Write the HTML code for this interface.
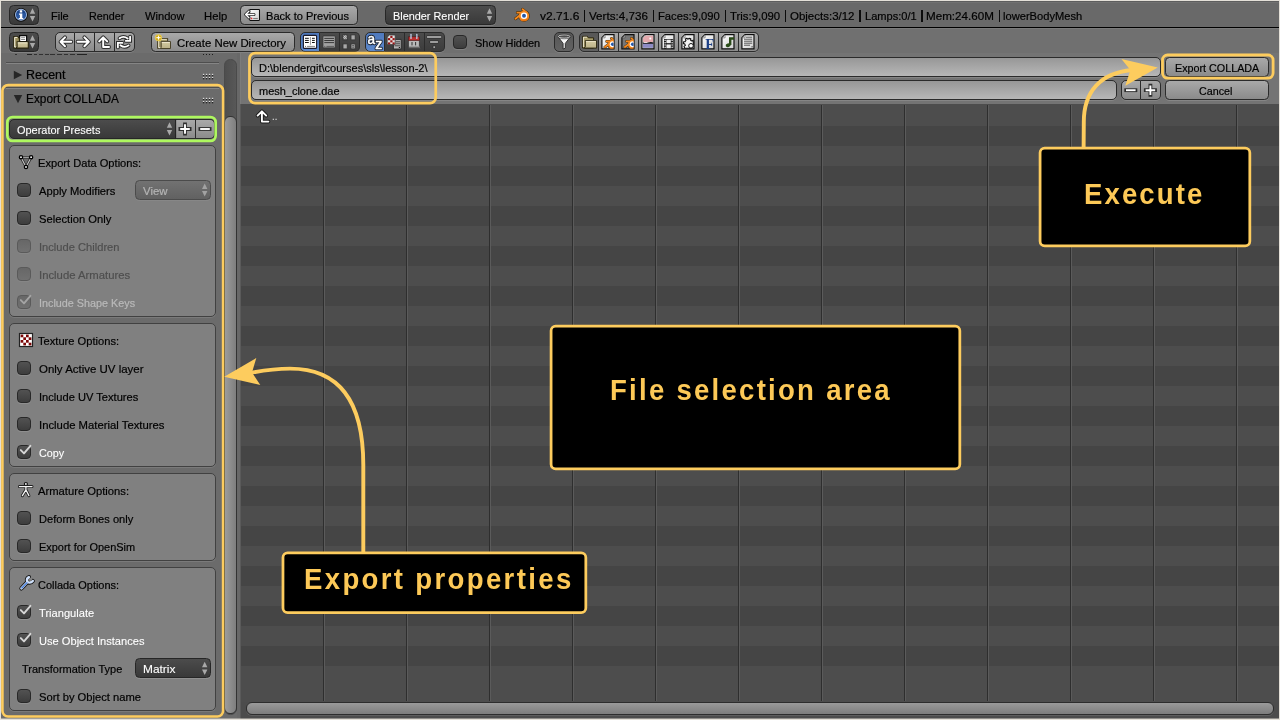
<!DOCTYPE html>
<html><head><meta charset="utf-8">
<style>
*{box-sizing:border-box;margin:0;padding:0}
html,body{width:1280px;height:720px;overflow:hidden;background:#727272;font-family:"Liberation Sans",sans-serif}
#root{position:absolute;left:0;top:0;width:1280px;height:720px;overflow:hidden;background:#727272}
#root div,#root span,#root svg{position:absolute}
.tx{white-space:pre;transform-origin:0 0;font-family:"Liberation Sans",sans-serif}
.btn{border:1px solid #2b2b2b;border-radius:4.5px;background:linear-gradient(#a9a9a9,#8b8b8b);box-shadow:0 1px 0 rgba(255,255,255,.13)}
.seg{border:1px solid #2b2b2b;background:linear-gradient(#a9a9a9,#8b8b8b);box-shadow:0 1px 0 rgba(255,255,255,.13)}
.segd{border:1px solid #2b2b2b;background:linear-gradient(#4b4b4b,#3c3c3c);box-shadow:0 1px 0 rgba(255,255,255,.13)}
.segb{border:1px solid #2b2b2b;background:linear-gradient(#4f79bd,#5c88cb);box-shadow:0 1px 0 rgba(255,255,255,.13)}
.segs{border:1px solid #2b2b2b;background:linear-gradient(#575757,#626262);box-shadow:0 1px 0 rgba(255,255,255,.13)}
.rl{border-radius:5px 0 0 5px}.rr{border-radius:0 5px 5px 0}.nl{border-left:none}
.menu{border:1px solid #262626;border-radius:4.5px;background:linear-gradient(#4c4c4c,#393939);box-shadow:0 1px 0 rgba(255,255,255,.13)}
.menul{border:1px solid #4b4b4b;border-radius:4.5px;background:linear-gradient(#727272,#616161);box-shadow:0 1px 0 rgba(255,255,255,.06)}
.field{border:1px solid #2b2b2b;border-radius:5px;background:linear-gradient(#979797,#b7b7b7);box-shadow:0 1px 0 rgba(255,255,255,.13)}
.chk{width:14px;height:14px;border:1px solid #282828;border-radius:4px;background:linear-gradient(#525252,#3d3d3d);box-shadow:0 1px 0 rgba(255,255,255,.12)}
.chkd{width:14px;height:14px;border:1px solid #5a5a5a;border-radius:4px;background:linear-gradient(#676767,#717171);box-shadow:0 1px 0 rgba(255,255,255,.05)}
.box{border:1px solid #414141;border-radius:5px;background:#808080;box-shadow:0 1px 0 rgba(255,255,255,.10)}
.ann{border:2.8px solid #fdcc5e;border-radius:7px;background:#000}
.yl{border:2.7px solid #fdcc5e;border-radius:7px}
</style></head><body>
<div id="root">

<!-- ===== file list area ===== -->
<div style="left:241px;top:104px;width:1038px;height:615px;background:#4c4c4c"></div>
<div style="left:241px;top:104px;width:1038px;height:598px;background:#4d4d4d"></div>
<div style="left:241px;top:106px;width:1038px;height:580px;background:repeating-linear-gradient(#4d4d4d 0,#4d4d4d 20px,#454545 20px,#454545 40px)"></div>
<div id="cols" style="left:241px;top:105px;width:1038px;height:596px;background:repeating-linear-gradient(90deg,transparent 0,transparent 82px,#2e2e2e 82px,#2e2e2e 83px,transparent 83px);"></div>
<div style="left:242px;top:105px;width:1038px;height:596px;background:repeating-linear-gradient(90deg,transparent 0,transparent 82px,#5b5b5b 82px,#5b5b5b 83px,transparent 83px);"></div>
<!-- h scrollbar -->
<div style="left:245.8px;top:702.4px;width:1028px;height:12.2px;border:1px solid #2d2d2d;border-radius:6px;background:linear-gradient(#9a9a9a,#7d7d7d);box-shadow:0 1px 0 rgba(255,255,255,.1)"></div>

<!-- ===== file bar (path / filename) ===== -->
<div style="left:241px;top:53px;width:1038px;height:51px;background:#747474"></div>
<div class="field" style="left:251px;top:57.3px;width:910px;height:19.3px"></div>
<div class="field" style="left:251px;top:80.3px;width:866px;height:19.3px"></div>
<div class="seg rl" style="left:1121px;top:80.3px;width:20px;height:19.3px"></div>
<div class="seg rr nl" style="left:1141px;top:80.3px;width:20px;height:19.3px"></div>
<div class="btn" style="left:1165px;top:57.3px;width:104px;height:19.3px"></div>
<div class="btn" style="left:1165px;top:80.3px;width:104px;height:19.3px"></div>

<!-- ===== left panel ===== -->
<div id="lp" style="left:0;top:53px;width:239px;height:667px;background:#6b6b6b"></div>
<div style="left:237px;top:53px;width:2.5px;height:667px;background:#686868"></div><div style="left:239.5px;top:53px;width:1.5px;height:51px;background:#7c7c7c"></div><div style="left:239.5px;top:104px;width:1.5px;height:616px;background:#5a5a5a"></div>
<!-- v scrollbar -->
<div style="left:224.4px;top:59px;width:12.4px;height:656px;border-radius:6.2px;background:linear-gradient(90deg,#4e4e4e,#585858);border:1px solid #4a4a4a"></div>
<div style="left:224.4px;top:116.4px;width:12.4px;height:598px;border-radius:6px;background:linear-gradient(90deg,#9c9c9c,#7e7e7e);border:1px solid #333"></div>
<!-- cut-off previous panel header -->
<div style="left:27px;top:54px;width:60px;height:1.4px;opacity:.8;background:linear-gradient(90deg,#111 0,#111 9%,transparent 9%,transparent 12%,#222 12%,#222 17%,transparent 17%,transparent 20%,#222 20%,#222 27%,transparent 27%,transparent 30%,#222 30%,#222 36%,transparent 36%,transparent 38%,#222 38%,#222 47%,transparent 47%,transparent 50%,#222 50%,#222 58%,transparent 58%,transparent 61%,#222 61%,#222 68%,transparent 68%,transparent 71%,#222 71%,#222 80%,transparent 80%,transparent 84%,#111 84%,#111 100%)"></div>
<div style="left:15px;top:54px;width:1.5px;height:1.2px;background:#333"></div>
<div style="left:203px;top:54.2px;width:10.4px;height:1.2px;background:repeating-linear-gradient(90deg,#1c1c1c 0,#1c1c1c 1.3px,transparent 1.3px,transparent 3px)"></div>
<!-- panel header lines -->
<div style="left:6px;top:62px;width:213px;height:1px;background:#4e4e4e"></div>
<div style="left:6px;top:63px;width:213px;height:1px;background:#858585"></div>
<div style="left:6px;top:87px;width:213px;height:1px;background:#4e4e4e"></div>
<div style="left:6px;top:88px;width:213px;height:1px;background:#858585"></div>
<!-- boxes -->
<div class="box" style="left:9px;top:145px;width:207px;height:172px"></div>
<div class="box" style="left:9px;top:323px;width:207px;height:144px"></div>
<div class="box" style="left:9px;top:473px;width:207px;height:88px"></div>
<div class="box" style="left:9px;top:567px;width:207px;height:144px"></div>
<!-- operator presets -->
<div class="menu" style="left:9px;top:119.3px;width:168px;height:19.3px;border-radius:5px 0 0 5px"></div>
<div class="seg nl" style="left:176px;top:119.3px;width:20px;height:19.3px"></div>
<div class="seg rr nl" style="left:196px;top:119.3px;width:19px;height:19.3px"></div>
<!-- dropdowns -->
<div class="menul" style="left:135px;top:180.3px;width:76px;height:19.3px"></div>
<div class="menu" style="left:135px;top:658.3px;width:76px;height:19.3px"></div>
<!-- checkboxes -->
<div class="chk" style="left:17px;top:183px"></div>
<div class="chk" style="left:17px;top:211px"></div>
<div class="chkd" style="left:17px;top:239px"></div>
<div class="chkd" style="left:17px;top:267px"></div>
<div class="chkd" style="left:17px;top:295px"></div>
<div class="chk" style="left:17px;top:361px"></div>
<div class="chk" style="left:17px;top:389px"></div>
<div class="chk" style="left:17px;top:417px"></div>
<div class="chk" style="left:17px;top:445px"></div>
<div class="chk" style="left:17px;top:511px"></div>
<div class="chk" style="left:17px;top:539px"></div>
<div class="chk" style="left:17px;top:605px"></div>
<div class="chk" style="left:17px;top:633px"></div>
<div class="chk" style="left:17px;top:689px"></div>

<!-- ===== headers ===== -->
<div id="hdr1" style="left:0;top:0;width:1280px;height:27px;background:linear-gradient(#5e5e5e 0,#5e5e5e 2px,#717171 2px,#717171 3.2px,#696969 3.2px)"></div>
<div style="left:0;top:27px;width:1280px;height:1px;background:#000"></div>
<div id="hdr2" style="left:0;top:28px;width:1280px;height:25px;background:linear-gradient(#7b7b7b 0,#7b7b7b 1.2px,#707070 1.2px)"></div>
<!-- header 1 widgets -->
<div class="menu" style="left:9px;top:5.3px;width:30px;height:19.3px"></div>
<div class="btn" style="left:240px;top:5.3px;width:118px;height:19.3px"></div>
<div class="menu" style="left:385px;top:5.3px;width:111px;height:19.3px"></div>
<!-- header 2 widgets -->
<div class="menu" style="left:9px;top:32.3px;width:30px;height:19.3px"></div>
<div class="seg rl" style="left:55px;top:32.3px;width:20px;height:19.3px"></div>
<div class="seg nl" style="left:75px;top:32.3px;width:20px;height:19.3px"></div>
<div class="seg nl" style="left:95px;top:32.3px;width:20px;height:19.3px"></div>
<div class="seg rr nl" style="left:115px;top:32.3px;width:20px;height:19.3px"></div>
<div class="btn" style="left:151px;top:32.3px;width:144px;height:19.3px"></div>
<div class="segb rl" style="left:300px;top:32.3px;width:20px;height:19.3px"></div>
<div class="segd nl" style="left:320px;top:32.3px;width:20px;height:19.3px"></div>
<div class="segd rr nl" style="left:340px;top:32.3px;width:20px;height:19.3px"></div>
<div class="segb rl" style="left:365px;top:32.3px;width:20px;height:19.3px"></div>
<div class="segd nl" style="left:385px;top:32.3px;width:20px;height:19.3px"></div>
<div class="segd nl" style="left:405px;top:32.3px;width:20px;height:19.3px"></div>
<div class="segd rr nl" style="left:425px;top:32.3px;width:20px;height:19.3px"></div>
<div class="chk" style="left:453px;top:35px"></div>
<div class="segs" style="left:554px;top:32.3px;width:20px;height:19.3px;border-radius:5px"></div>
<div class="segs rl" style="left:579px;top:32.3px;width:20px;height:19.3px"></div>
<div class="seg nl" style="left:599px;top:32.3px;width:20px;height:19.3px"></div>
<div class="seg nl" style="left:619px;top:32.3px;width:20px;height:19.3px"></div>
<div class="seg nl" style="left:639px;top:32.3px;width:20px;height:19.3px"></div>
<div class="seg nl" style="left:659px;top:32.3px;width:20px;height:19.3px"></div>
<div class="seg nl" style="left:679px;top:32.3px;width:20px;height:19.3px"></div>
<div class="seg nl" style="left:699px;top:32.3px;width:20px;height:19.3px"></div>
<div class="seg nl" style="left:719px;top:32.3px;width:20px;height:19.3px"></div>
<div class="seg rr nl" style="left:739px;top:32.3px;width:20px;height:19.3px"></div>

<svg style="left:0;top:0;will-change:transform" width="1280" height="720" viewBox="0 0 1280 720">
<defs>
<linearGradient id="gpage" x1="0" y1="0" x2="1" y2="1"><stop offset="0" stop-color="#fff"/><stop offset="1" stop-color="#cfcfcf"/></linearGradient>
<linearGradient id="gfold" x1="0" y1="0" x2="0" y2="1"><stop offset="0" stop-color="#d4cba2"/><stop offset="1" stop-color="#bcb288"/></linearGradient>
<g id="updn" fill="#a9a9a9"><path d="M0 5.5 L2.7 0 L5.4 5.5Z"/><path d="M0 7.7 L5.4 7.7 L2.7 13.2Z"/></g>
<g id="updnd" fill="#a2a2a2"><path d="M0 5.5 L2.7 0 L5.4 5.5Z"/><path d="M0 7.7 L5.4 7.7 L2.7 13.2Z"/></g>
<!-- generic file page 13x15 with dog-ear at top-left -->
<g id="page"><path d="M3.6 0.5 H12.6 V14.6 H0.5 V3.6Z" fill="url(#gpage)" stroke="#101010" stroke-width="1.2"/><path d="M0.8 3.7 L3.7 3.7 L3.7 0.8" fill="#e8e8e8" stroke="#555" stroke-width=".6"/></g>
<g id="pageg"><path d="M3.6 0.5 H12.6 V14.6 H0.5 V3.6Z" fill="#777" stroke="#101010" stroke-width="1.2"/><path d="M0.8 3.7 L3.7 3.7 L3.7 0.8" fill="#aaa" stroke="#444" stroke-width=".6"/></g>
<g id="folder"><path d="M0.5 0.9 H5.4 L6.4 2.4 H11.6 V12.6 H0.5Z" fill="#a89d6b" stroke="#2b260f" stroke-width="1"/><path d="M1.4 11.6 V1.8 H5" fill="none" stroke="#f3eed8" stroke-width=".9"/><path d="M3.3 5.2 H14.6 V12.7 H2.2 L3.3 11.4Z" fill="url(#gfold)" stroke="#2b260f" stroke-width="1"/><path d="M3.9 6 H13.8" stroke="#f0ead0" stroke-width=".9" fill="none"/></g>
<g id="chk" fill="none" stroke-linecap="round" stroke-linejoin="round"><path d="M3.8 5.1 L7 8.4 L13.4 0.8" stroke="#d6d6d6" stroke-width="1.9"/></g>
<g id="chkd" fill="none" stroke-linecap="round" stroke-linejoin="round"><path d="M3.8 5.1 L7 8.4 L13.4 0.8" stroke="#a4a4a4" stroke-width="1.9"/></g>
<g id="blogo"><g fill="none" stroke="#4a300c" stroke-width="3" stroke-linecap="round"><path d="M1.2 10.5 L6 6.9 M3.1 4.4 H8 M8.3 1.1 L12.4 4.6"/></g><circle cx="9.7" cy="7.7" r="5.75" fill="#4a300c"/>
<g fill="none" stroke="#f6891f" stroke-width="1.9" stroke-linecap="round"><path d="M1.2 10.5 L6 6.9 M3.1 4.4 H8 M8.3 1.1 L12.4 4.6"/></g><circle cx="9.7" cy="7.7" r="5.2" fill="#f6891f"/><path d="M5 10.2 A5.2 5.2 0 0 0 14.6 9.6 Q10 13.5 5 10.2Z" fill="#e87510"/>
<circle cx="9.7" cy="7.5" r="3.25" fill="#fff"/><circle cx="9.7" cy="7.5" r="1.95" fill="#2457a8"/></g>
</defs>

<!-- editor-type: info -->
<circle cx="21" cy="14.8" r="6.9" fill="#0c0c0c"/><circle cx="21" cy="14.8" r="6" fill="#a9c2ea"/><circle cx="21" cy="14.8" r="5.1" fill="#2a569e"/><path d="M16.4 13.4 A4.8 4.8 0 0 1 25.6 13.4 Q21 11.4 16.4 13.4Z" fill="#1c4486"/>
<path d="M19.8 10.3 h2.4 v2.1 h-2.4z M19 13.5 h3.3 v4.5 h1 v1.2 h-4.6 v-1.2 h1.2 v-3.3 h-.9z" fill="#fff"/>
<use href="#updn" x="29.8" y="8.2"/>
<!-- editor-type: file browser -->
<g transform="translate(13.2,35.1)"><path d="M6.4 0.6 H13.4 V6.4 H6.4Z" fill="#fff" stroke="#0c0c0c" stroke-width="1.2"/><path d="M7.9 2.6 H11.9 M7.9 4.4 H11.9" stroke="#8a8a8a" stroke-width="1"/>
<path d="M0.6 1.4 H4.6 L5.6 2.8 H6.2 V12.9 H0.6Z" fill="#9a8f5e" stroke="#2b260f" stroke-width="1.1"/><path d="M1.5 11.9 V2.3 H4.2" fill="none" stroke="#f6f2de" stroke-width="1"/><path d="M1.5 12 H3.6" stroke="#fff" stroke-width="1"/>
<path d="M3.9 6.8 H15.1 V13 H2.8 L3.9 11.6Z" fill="url(#gfold)" stroke="#2b260f" stroke-width="1.1"/><path d="M4.5 7.7 H14.3" stroke="#f3eed2" stroke-width="1"/></g>
<use href="#updn" x="29.8" y="35.2"/>
<!-- back to previous -->
<g><rect x="249.7" y="9.4" width="9.8" height="11" rx=".6" fill="url(#gpage)" stroke="#0e0e0e" stroke-width="1.05"/><circle cx="251.6" cy="18.4" r=".85" fill="#e0303a"/><path d="M253.2 18.5 H257.8" stroke="#7c7c7c" stroke-width="1.1"/>
<path d="M254 14.5 H245.8 M248.9 11.2 L245.6 14.5 L248.9 17.8" fill="none" stroke="#262626" stroke-width="3" stroke-linecap="round" stroke-linejoin="round"/><path d="M254 14.5 H245.8 M248.9 11.2 L245.6 14.5 L248.9 17.8" fill="none" stroke="#fff" stroke-width="1.3" stroke-linecap="round" stroke-linejoin="round"/></g>
<!-- render engine menu arrows + blender logo -->
<use href="#updn" x="486.8" y="8.2"/>
<use href="#blogo" x="514.3" y="8.2"/>

<!-- nav arrows -->
<g fill="none" stroke-linecap="round" stroke-linejoin="round">
<g stroke="#303030" stroke-width="4"><path d="M71.2 41.8 H60.8 M65 37.4 L60.6 41.8 L65 46.2"/><path d="M77.6 41.8 H88.6 M84.4 37.4 L88.8 41.8 L84.4 46.2"/><path d="M99.2 41.4 L103.2 37.4 L107.2 41.4 M103.2 38 V46.9 H109"/></g>
<g stroke="#fff" stroke-width="2"><path d="M71.2 41.8 H60.8 M65 37.4 L60.6 41.8 L65 46.2"/><path d="M77.6 41.8 H88.6 M84.4 37.4 L88.8 41.8 L84.4 46.2"/><path d="M99.2 41.4 L103.2 37.4 L107.2 41.4 M103.2 38 V46.9 H109"/></g>
</g>
<!-- refresh -->
<g fill="none" stroke-linejoin="miter" stroke-linecap="round">
<g stroke="#2c2c2c" stroke-width="3.7"><path d="M119.5 38.3 Q123.4 35.3 127.7 38.5 M130.1 36.6 V40.8 H125.7"/><path d="M128.6 45.4 Q124.4 48.5 120.4 45.3 M117.9 47.4 V42.9 H122.5"/></g>
<g stroke="#fff" stroke-width="1.8"><path d="M119.5 38.3 Q123.4 35.3 127.7 38.5 M130.1 36.6 V40.8 H125.7"/><path d="M128.6 45.4 Q124.4 48.5 120.4 45.3 M117.9 47.4 V42.9 H122.5"/></g>
</g>
<!-- new folder -->
<g transform="translate(157.2,38)"><path d="M0.5 0.5 H10.4 V3 H0.5Z M0.5 0.5 V10.4 H4" fill="#a39968" stroke="#4a432a" stroke-width="1"/><path d="M0.5 0.5 H10.4 V10.4 H0.5Z" fill="#a1976a" stroke="#4a432a" stroke-width="1"/><path d="M1.4 9.6 V1.4 H9.6" fill="none" stroke="#e9e3c8" stroke-width=".9"/><path d="M1.4 9.7 H3.4" stroke="#fff" stroke-width=".9"/>
<path d="M4 3.5 H13.3 V10.5 H3 L4 9.3Z" fill="url(#gfold)" stroke="#4a432a" stroke-width="1"/><path d="M4.6 4.4 H12.6" stroke="#f0ead2" stroke-width=".9"/></g>
<circle cx="158.5" cy="37.7" r="3.3" fill="#e6bd1c" opacity=".92"/><circle cx="158.5" cy="37.7" r="3.3" fill="none" stroke="#f5dc6a" stroke-width=".7" opacity=".7"/>
<path d="M158.5 34.9 L159.1 37.1 L161.3 37.7 L159.1 38.3 L158.5 40.5 L157.9 38.3 L155.7 37.7 L157.9 37.1Z" fill="#fff"/>
<g fill="#b78e10"><circle cx="157" cy="36.2" r=".55"/><circle cx="160" cy="36.2" r=".55"/><circle cx="157" cy="39.2" r=".55"/><circle cx="160" cy="39.2" r=".55"/></g>
<!-- display: short list -->
<rect x="303.4" y="35.4" width="13.2" height="13" rx="1" fill="#fff" stroke="#1a1a2a" stroke-width="1.1"/>
<path d="M305 38.3 H308.8 M305 40.4 H308.8 M305 42.5 H308.8 M312 38.3 H314.8 M312 40.4 H314.8 M312 42.5 H314.8" stroke="#111" stroke-width="1"/>
<path d="M310.4 37 V44.8" stroke="#888" stroke-width=".9"/><path d="M307 46.4 H315" stroke="#777" stroke-width=".9"/><rect x="305" y="45.9" width="1" height="1" fill="#666"/>
<!-- display: long list -->
<rect x="322.9" y="35.9" width="12.4" height="12" rx=".8" fill="#a2a2a2" stroke="#333" stroke-width=".9"/>
<path d="M324.3 38.4 H334 M324.3 40.5 H334 M324.3 42.6 H334" stroke="#3a3a3a" stroke-width="1"/><path d="M326.4 46.4 H334" stroke="#555" stroke-width=".9"/><rect x="324.3" y="45.9" width="1" height="1" fill="#555"/>
<!-- display: thumbnails -->
<g stroke="#333" stroke-width=".8"><rect x="343" y="34.9" width="4.2" height="5" fill="#8a8a8a"/><rect x="351" y="34.9" width="4.2" height="5" fill="#a8a8a8"/><rect x="343" y="43.9" width="4.2" height="5" fill="#a8a8a8"/><rect x="351" y="43.9" width="4.2" height="5" fill="#a8a8a8"/></g>
<path d="M343.6 35.6 l1 1 l1-1 l1 1 M343.6 37.6 l1 1 l1-1 l1 1 M344.6 36.6 l1 1 M343.6 37.6 l1-1" stroke="#ddd" stroke-width=".7" fill="none"/>
<path d="M352.2 45.6 H354 M352.2 47.2 H354" stroke="#444" stroke-width=".8"/>

<!-- sort: alpha -->
<g font-family="Liberation Sans" font-size="15.5px" stroke-linejoin="round">
<text x="367.4" y="44.3" fill="none" stroke="#1a2230" stroke-width="2.6" textLength="7.6" lengthAdjust="spacingAndGlyphs">a</text><text x="367.4" y="44.3" fill="#fff" stroke="#fff" stroke-width=".5" textLength="7.6" lengthAdjust="spacingAndGlyphs">a</text>
<text x="375.2" y="48.6" fill="none" stroke="#1a2230" stroke-width="2.6" textLength="7" lengthAdjust="spacingAndGlyphs">z</text><text x="375.2" y="48.6" fill="#fff" stroke="#fff" stroke-width=".5" textLength="7" lengthAdjust="spacingAndGlyphs">z</text></g>
<!-- sort: extension -->
<g><path d="M393.4 39.4 H401.2 V49 H393.4Z" fill="#b4b4b4" stroke="#262626" stroke-width=".9"/><path d="M395.6 41.8 H400 M395.6 43.8 H400 M394.6 45.8 H400" stroke="#3c3c3c" stroke-width=".9"/><rect x="398.8" y="47" width="1.2" height="1" fill="#1c1c1c"/>
<path d="M389.4 35 H395.2 V44.6 H387.2 V37.2Z" fill="#e2e2e2" stroke="#3a3a3a" stroke-width=".8"/>
<g fill="#991414"><rect x="390.3" y="35.9" width="2.2" height="2.1"/><rect x="388" y="38.1" width="2.2" height="2.1"/><rect x="392.5" y="38.1" width="2.2" height="2.1"/><rect x="390.3" y="40.3" width="2.2" height="2.1"/><rect x="388" y="42.4" width="2.2" height="1.9"/><rect x="392.5" y="42.4" width="2.2" height="1.9"/></g></g>
<!-- sort: time -->
<g><path d="M408.4 38.8 H419.4 V45.8 L421 48.2 H408.4Z" fill="#b9b9b9" stroke="#333" stroke-width=".8"/><rect x="408.4" y="36.8" width="11" height="3.8" fill="#b93030" stroke="#4a1a1a" stroke-width=".6"/>
<path d="M411 34.4 V38.2 M416.8 34.4 V38.2" stroke="#c8d4e8" stroke-width="1.5" stroke-linecap="round"/><path d="M411 34.6 V37.6 M416.8 34.6 V37.6" stroke="#5a6a8a" stroke-width=".5"/>
<path d="M412 42 V45.4 M415.6 42 V45.4" stroke="#333" stroke-width="1"/><path d="M409 47.2 H420" stroke="#444" stroke-width=".8"/></g>
<!-- sort: size -->
<g stroke-linecap="round"><path d="M427.4 37 H440.8 M430.6 42 H437.6" stroke="#2a2a2a" stroke-width="2.8"/><path d="M427.4 37 H440.8 M430.6 42 H437.6" stroke="#c4c4c4" stroke-width="1.4"/><rect x="433" y="46" width="2.4" height="2.2" fill="#bdbdbd" stroke="#2a2a2a" stroke-width=".7"/></g>

<!-- filter funnel -->
<g><path d="M557.9 36.6 L563.1 43.4 V49 L565.3 48.2 V43.4 L570.5 36.6Z" fill="#f6f6f6" stroke="#262626" stroke-width=".9" stroke-linejoin="round"/><ellipse cx="564.2" cy="36.5" rx="6" ry="1.7" fill="#4c4c4c" stroke="#f2f2f2" stroke-width=".9"/><ellipse cx="564.2" cy="36.5" rx="6.6" ry="2.3" fill="none" stroke="#262626" stroke-width=".6"/></g>
<!-- file-type: folder -->
<g transform="translate(582,35.4)"><use href="#folder"/></g>
<!-- blend -->
<g transform="translate(601.4,34.2)"><use href="#page"/><clipPath id="cp1"><rect x="1" y="1" width="11.2" height="13.2"/></clipPath><g clip-path="url(#cp1)"><use href="#blogo" transform="translate(2.4,3.2) scale(.92)"/></g></g>
<g transform="translate(621.4,34.2)"><use href="#pageg"/><clipPath id="cp2"><rect x="1" y="1" width="11.2" height="13.2"/></clipPath><g clip-path="url(#cp2)"><use href="#blogo" transform="translate(2.4,3.2) scale(.92)"/></g></g>
<!-- image -->
<g transform="translate(641.4,34.2)"><use href="#page"/><path d="M4 1.6 H11.6 V8 H1.6 V4Z" fill="#e4a9ad"/><rect x="1.6" y="9" width="10" height="4.6" fill="#8d8bc4"/><path d="M1.4 8 Q4 9.6 6.6 8.4 T12 8.2 V9.6 H1.4Z" fill="#111"/><rect x="8" y="3.4" width="1.8" height="1.8" fill="#fff"/></g>
<!-- movie -->
<g transform="translate(661.4,34.2)"><use href="#page"/><rect x="2.6" y="4.8" width="9.2" height="9.6" fill="#0c0c0c"/><rect x="5" y="5.4" width="4.4" height="3.6" fill="#eee"/><rect x="5" y="10.2" width="4.4" height="3.8" fill="#eee"/><g fill="#fff"><rect x="3.1" y="5.5" width="1.2" height="1.4"/><rect x="3.1" y="7.8" width="1.2" height="1.4"/><rect x="3.1" y="10.1" width="1.2" height="1.4"/><rect x="3.1" y="12.4" width="1.2" height="1.4"/><rect x="10.1" y="5.5" width="1.2" height="1.4"/><rect x="10.1" y="7.8" width="1.2" height="1.4"/><rect x="10.1" y="10.1" width="1.2" height="1.4"/><rect x="10.1" y="12.4" width="1.2" height="1.4"/></g></g>
<!-- script -->
<g transform="translate(681.4,34.2)"><use href="#page"/><path d="M7.6 4.2 L9.4 4.6 L9.2 6 L10.6 6.8 L11.8 6 L12 10 L9.8 14 L3.4 14 L2.6 12.2 L4 11.2 L3.2 9.6 L2 9.4 L2.2 7.6 L3.8 7.4 L4.6 6 L4 4.8 L5.4 4 L6.4 5 Z" fill="#f2f2f2" stroke="#111" stroke-width="1.1" stroke-linejoin="round"/><circle cx="9.6" cy="11.6" r="2.3" fill="#fff" stroke="#111" stroke-width="1"/></g>
<!-- font -->
<g transform="translate(701.4,34.2)"><use href="#page"/><text x="3.8" y="14.4" font-family="Liberation Serif" font-weight="bold" font-size="14.5px" fill="#1c3f86">F</text></g>
<!-- sound -->
<g transform="translate(721.4,34.2)"><use href="#page"/><path d="M8.2 10.4 V3.6 H12 V5 H9.4 V10.8" fill="none" stroke="#2a4a18" stroke-width="1.2"/><ellipse cx="6.8" cy="11" rx="2.6" ry="1.8" fill="#2a4d18" transform="rotate(-20 6.8 11)"/></g>
<!-- text -->
<g transform="translate(741.4,34.2)"><use href="#page"/><path d="M4.6 3 H10.8 M2.6 5 H10.8 M2.6 7 H10.8 M2.6 9 H10.8 M2.6 11 H8.6" stroke="#444" stroke-width=".9"/><rect x="10" y="12.2" width="1.4" height=".9" fill="#333"/></g>

<!-- filename +/- -->
<g><path d="M1126.2 90.2 H1135.4" stroke="#2e2e2e" stroke-width="3.8" stroke-linecap="square"/><path d="M1126 90.2 H1135.6" stroke="#fff" stroke-width="1.9"/>
<path d="M1145.8 90.2 H1155 M1150.4 85.6 V94.8" stroke="#2e2e2e" stroke-width="3.8" stroke-linecap="square"/><path d="M1145.6 90.2 H1155.2 M1150.4 85.4 V95" stroke="#fff" stroke-width="1.9"/></g>
<!-- presets +/- -->
<g><path d="M180.4 129 H189.6 M185 124.4 V133.6" stroke="#2e2e2e" stroke-width="3.8" stroke-linecap="square"/><path d="M180.2 129 H189.8 M185 124.2 V133.8" stroke="#fff" stroke-width="1.9"/>
<path d="M200.4 129 H209.6" stroke="#2e2e2e" stroke-width="3.8" stroke-linecap="square"/><path d="M200.2 129 H209.8" stroke="#fff" stroke-width="1.9"/></g>
<path d="M175.6 119.6 V138.4" stroke="#222" stroke-width="1.1"/>
<use href="#updn" x="166.8" y="122.2"/>
<use href="#updnd" x="202" y="183.4"/>
<use href="#updn" x="202" y="661.7"/>

<!-- panel triangles + grips -->
<path d="M13.8 70.8 L22.2 75 L13.8 79.2Z" fill="#262626"/>
<path d="M13.8 95 L22.2 95 L18 103.2Z" fill="#262626"/>
<g id="grip"><g fill="#dcdcdc"><rect x="202.9" y="73.8" width="1.3" height="1.2"/><rect x="205.9" y="73.8" width="1.3" height="1.2"/><rect x="208.9" y="73.8" width="1.3" height="1.2"/><rect x="211.9" y="73.8" width="1.3" height="1.2"/><rect x="202.9" y="76.8" width="1.3" height="1.2"/><rect x="205.9" y="76.8" width="1.3" height="1.2"/><rect x="208.9" y="76.8" width="1.3" height="1.2"/><rect x="211.9" y="76.8" width="1.3" height="1.2"/></g><g fill="#1c1c1c"><rect x="202.9" y="75.1" width="1.3" height="1.2"/><rect x="205.9" y="75.1" width="1.3" height="1.2"/><rect x="208.9" y="75.1" width="1.3" height="1.2"/><rect x="211.9" y="75.1" width="1.3" height="1.2"/><rect x="202.9" y="78.1" width="1.3" height="1.2"/><rect x="205.9" y="78.1" width="1.3" height="1.2"/><rect x="208.9" y="78.1" width="1.3" height="1.2"/><rect x="211.9" y="78.1" width="1.3" height="1.2"/></g></g><use href="#grip" y="24"/>

<!-- mesh icon -->
<g><path d="M21 157.3 L31.1 157.3 L26 167Z" fill="#6c6c6c" stroke="#222" stroke-width="2.6" stroke-linejoin="round"/><path d="M21 157.3 L31.1 157.3 L26 167Z" fill="none" stroke="#c6c6c6" stroke-width="1.1"/>
<g fill="#fff" stroke="#000" stroke-width="1.4"><circle cx="21" cy="157.2" r="1.6"/><circle cx="31.1" cy="157.2" r="1.6"/><circle cx="26" cy="167" r="1.6"/></g></g>
<!-- texture icon -->
<g><rect x="19.5" y="333.5" width="13" height="13" fill="#fff" stroke="#222" stroke-width="1.2"/><g fill="#7c0808"><rect x="20.6" y="334.6" width="2.7" height="2.7"/><rect x="26" y="334.6" width="2.7" height="2.7"/><rect x="23.3" y="337.3" width="2.7" height="2.7"/><rect x="28.7" y="337.3" width="2.7" height="2.7"/><rect x="20.6" y="340" width="2.7" height="2.7"/><rect x="26" y="340" width="2.7" height="2.7"/><rect x="23.3" y="342.7" width="2.7" height="2.7"/><rect x="28.7" y="342.7" width="2.7" height="2.7"/></g></g>
<!-- armature icon -->
<g fill="none" stroke-linecap="round" stroke-linejoin="round"><path d="M19.4 486.6 H32 M25.9 486.6 V489.8 L22.4 495.6 M25.9 489.8 L28.9 495.6" stroke="#1e1e1e" stroke-width="3"/><path d="M19.4 486.6 H32 M25.9 486.6 V489.8 L22.4 495.6 M25.9 489.8 L28.9 495.6" stroke="#f4f4f4" stroke-width="1.3"/><circle cx="25.9" cy="484" r="1.5" fill="#fff" stroke="#111" stroke-width="1.2"/></g>
<!-- wrench icon -->
<g fill="none" stroke-linecap="round" stroke-linejoin="round"><path d="M21.4 588.4 L27.4 582 M27.4 582 Q26 578.6 29 577.2 M27.4 582 Q30.6 583.6 32.8 581" stroke="#161616" stroke-width="4.2"/><path d="M21.4 588.4 L27.4 582 M27.4 582 Q26 578.6 29 577.2 M27.4 582 Q30.6 583.6 32.8 581" stroke="#cfe0fa" stroke-width="2.4"/><path d="M21.8 588 L27 582.6" stroke="#3f78d8" stroke-width="1.1"/><circle cx="30.4" cy="579.4" r="1.7" fill="#808080" stroke="none"/></g>

<!-- check marks -->
<use href="#chkd" x="17" y="295"/>
<use href="#chk" x="17" y="445"/>
<use href="#chk" x="17" y="605"/>
<use href="#chk" x="17" y="633"/>
<!-- parent dir icon in file list -->
<g fill="none" stroke-linecap="round" stroke-linejoin="round"><path d="M257.6 115.6 L261.9 111.3 L266.2 115.6 M261.9 112 V121.6 H268.4" stroke="#1c1c1c" stroke-width="3.8"/><path d="M257.6 115.6 L261.9 111.3 L266.2 115.6 M261.9 112 V121.6 H268.4" stroke="#fff" stroke-width="1.9"/></g>
</svg>


<div id="txt" style="left:0;top:0;width:1280px;height:720px;will-change:transform">
<span class="tx" style="left:51.3px;-webkit-text-stroke:0.2px;top:10.11px;font-size:11.5px;line-height:13.22px;color:#000;font-weight:normal;transform:scaleX(0.9551)">File</span>
<span class="tx" style="left:89.1px;-webkit-text-stroke:0.2px;top:10.11px;font-size:11.5px;line-height:13.22px;color:#000;font-weight:normal;transform:scaleX(0.9359)">Render</span>
<span class="tx" style="left:144.9px;-webkit-text-stroke:0.2px;top:10.11px;font-size:11.5px;line-height:13.22px;color:#000;font-weight:normal;transform:scaleX(0.9681)">Window</span>
<span class="tx" style="left:204.4px;-webkit-text-stroke:0.2px;top:10.11px;font-size:11.5px;line-height:13.22px;color:#000;font-weight:normal;transform:scaleX(0.9807)">Help</span>
<span class="tx" style="left:266.4px;-webkit-text-stroke:0.2px;top:10.11px;font-size:11.5px;line-height:13.22px;color:#000;font-weight:normal;transform:scaleX(0.9618)">Back to Previous</span>
<span class="tx" style="left:393.4px;-webkit-text-stroke:0.1px;top:10.11px;font-size:11.5px;line-height:13.22px;color:#fff;font-weight:normal;transform:scaleX(0.9458)">Blender Render</span>
<span class="tx" style="left:539.9px;-webkit-text-stroke:0.2px;top:10.11px;font-size:11.5px;line-height:13.22px;color:#000;font-weight:normal;transform:scaleX(1.0441)">v2.71.6</span>
<span class="tx" style="left:589.1px;-webkit-text-stroke:0.2px;top:10.11px;font-size:11.5px;line-height:13.22px;color:#000;font-weight:normal;transform:scaleX(1.0122)">Verts:4,736</span>
<span class="tx" style="left:658.0px;-webkit-text-stroke:0.2px;top:10.11px;font-size:11.5px;line-height:13.22px;color:#000;font-weight:normal;transform:scaleX(0.9764)">Faces:9,090</span>
<span class="tx" style="left:729.8px;-webkit-text-stroke:0.2px;top:10.11px;font-size:11.5px;line-height:13.22px;color:#000;font-weight:normal;transform:scaleX(0.9878)">Tris:9,090</span>
<span class="tx" style="left:790.0px;-webkit-text-stroke:0.2px;top:10.11px;font-size:11.5px;line-height:13.22px;color:#000;font-weight:normal;transform:scaleX(0.9988)">Objects:3/12</span>
<span class="tx" style="left:864.5px;-webkit-text-stroke:0.2px;top:10.11px;font-size:11.5px;line-height:13.22px;color:#000;font-weight:normal;transform:scaleX(0.9627)">Lamps:0/1</span>
<span class="tx" style="left:926.3px;-webkit-text-stroke:0.2px;top:10.11px;font-size:11.5px;line-height:13.22px;color:#000;font-weight:normal;transform:scaleX(1.0118)">Mem:24.60M</span>
<span class="tx" style="left:1003.3px;-webkit-text-stroke:0.2px;top:10.11px;font-size:11.5px;line-height:13.22px;color:#000;font-weight:normal;transform:scaleX(0.9679)">lowerBodyMesh</span>
<span class="tx" style="left:177.1px;-webkit-text-stroke:0.2px;top:37.11px;font-size:11.5px;line-height:13.22px;color:#000;font-weight:normal;transform:scaleX(0.9916)">Create New Directory</span>
<span class="tx" style="left:475.2px;-webkit-text-stroke:0.2px;top:37.11px;font-size:11.5px;line-height:13.22px;color:#000;font-weight:normal;transform:scaleX(0.9531)">Show Hidden</span>
<span class="tx" style="left:259.1px;-webkit-text-stroke:0.2px;top:62.11px;font-size:11.5px;line-height:13.22px;color:#000;font-weight:normal;transform:scaleX(0.9586)">D:\blendergit\courses\sls\lesson-2\</span>
<span class="tx" style="left:259.1px;-webkit-text-stroke:0.2px;top:85.11px;font-size:11.5px;line-height:13.22px;color:#000;font-weight:normal;transform:scaleX(0.9537)">mesh_clone.dae</span>
<span class="tx" style="left:1175.0px;-webkit-text-stroke:0.2px;top:62.11px;font-size:11.5px;line-height:13.22px;color:#000;font-weight:normal;transform:scaleX(0.9354)">Export COLLADA</span>
<span class="tx" style="left:1199.1px;-webkit-text-stroke:0.2px;top:85.11px;font-size:11.5px;line-height:13.22px;color:#000;font-weight:normal;transform:scaleX(0.9326)">Cancel</span>
<span class="tx" style="left:26.2px;-webkit-text-stroke:0.2px;top:68.18px;font-size:12.5px;line-height:14.37px;color:#000;font-weight:normal;transform:scaleX(0.9972)">Recent</span>
<span class="tx" style="left:26.2px;-webkit-text-stroke:0.2px;top:92.18px;font-size:12.5px;line-height:14.37px;color:#000;font-weight:normal;transform:scaleX(0.9483)">Export COLLADA</span>
<span class="tx" style="left:16.9px;-webkit-text-stroke:0.1px;top:123.61px;font-size:11.5px;line-height:13.22px;color:#fff;font-weight:normal;transform:scaleX(0.9523)">Operator Presets</span>
<span class="tx" style="left:37.9px;-webkit-text-stroke:0.2px;top:156.71px;font-size:11.5px;line-height:13.22px;color:#000;font-weight:normal;transform:scaleX(0.9658)">Export Data Options:</span>
<span class="tx" style="left:38.9px;-webkit-text-stroke:0.2px;top:184.61px;font-size:11.5px;line-height:13.22px;color:#000;font-weight:normal;transform:scaleX(0.9717)">Apply Modifiers</span>
<span class="tx" style="left:143.0px;-webkit-text-stroke:0.2px;top:184.61px;font-size:11.5px;line-height:13.22px;color:#b4b4b4;font-weight:normal;transform:scaleX(0.9912)">View</span>
<span class="tx" style="left:38.9px;-webkit-text-stroke:0.2px;top:212.61px;font-size:11.5px;line-height:13.22px;color:#000;font-weight:normal;transform:scaleX(0.9750)">Selection Only</span>
<span class="tx" style="left:38.9px;-webkit-text-stroke:0.2px;top:240.71px;font-size:11.5px;line-height:13.22px;color:#4e4e4e;font-weight:normal;transform:scaleX(0.9686)">Include Children</span>
<span class="tx" style="left:38.9px;-webkit-text-stroke:0.2px;top:268.71px;font-size:11.5px;line-height:13.22px;color:#4e4e4e;font-weight:normal;transform:scaleX(0.9840)">Include Armatures</span>
<span class="tx" style="left:38.9px;-webkit-text-stroke:0.2px;top:296.81px;font-size:11.5px;line-height:13.22px;color:#b9b9b9;font-weight:normal;transform:scaleX(0.9394)">Include Shape Keys</span>
<span class="tx" style="left:37.9px;-webkit-text-stroke:0.2px;top:334.81px;font-size:11.5px;line-height:13.22px;color:#000;font-weight:normal;transform:scaleX(0.9685)">Texture Options:</span>
<span class="tx" style="left:38.9px;-webkit-text-stroke:0.2px;top:362.61px;font-size:11.5px;line-height:13.22px;color:#000;font-weight:normal;transform:scaleX(0.9969)">Only Active UV layer</span>
<span class="tx" style="left:38.9px;-webkit-text-stroke:0.2px;top:390.61px;font-size:11.5px;line-height:13.22px;color:#000;font-weight:normal;transform:scaleX(0.9669)">Include UV Textures</span>
<span class="tx" style="left:38.9px;-webkit-text-stroke:0.2px;top:418.71px;font-size:11.5px;line-height:13.22px;color:#000;font-weight:normal;transform:scaleX(0.9832)">Include Material Textures</span>
<span class="tx" style="left:38.9px;-webkit-text-stroke:0.1px;top:446.61px;font-size:11.5px;line-height:13.22px;color:#fff;font-weight:normal;transform:scaleX(0.9382)">Copy</span>
<span class="tx" style="left:37.9px;-webkit-text-stroke:0.2px;top:484.81px;font-size:11.5px;line-height:13.22px;color:#000;font-weight:normal;transform:scaleX(0.9761)">Armature Options:</span>
<span class="tx" style="left:38.9px;-webkit-text-stroke:0.2px;top:512.61px;font-size:11.5px;line-height:13.22px;color:#000;font-weight:normal;transform:scaleX(0.9632)">Deform Bones only</span>
<span class="tx" style="left:38.9px;-webkit-text-stroke:0.2px;top:540.71px;font-size:11.5px;line-height:13.22px;color:#000;font-weight:normal;transform:scaleX(0.9516)">Export for OpenSim</span>
<span class="tx" style="left:37.9px;-webkit-text-stroke:0.2px;top:578.61px;font-size:11.5px;line-height:13.22px;color:#000;font-weight:normal;transform:scaleX(0.9538)">Collada Options:</span>
<span class="tx" style="left:38.9px;-webkit-text-stroke:0.1px;top:606.71px;font-size:11.5px;line-height:13.22px;color:#fff;font-weight:normal;transform:scaleX(0.9666)">Triangulate</span>
<span class="tx" style="left:38.9px;-webkit-text-stroke:0.1px;top:634.71px;font-size:11.5px;line-height:13.22px;color:#fff;font-weight:normal;transform:scaleX(0.9651)">Use Object Instances</span>
<span class="tx" style="left:22.1px;-webkit-text-stroke:0.2px;top:663.31px;font-size:11.5px;line-height:13.22px;color:#000;font-weight:normal;transform:scaleX(0.9568)">Transformation Type</span>
<span class="tx" style="left:143.0px;-webkit-text-stroke:0.1px;top:663.31px;font-size:11.5px;line-height:13.22px;color:#fff;font-weight:normal;transform:scaleX(1.0347)">Matrix</span>
<span class="tx" style="left:38.9px;-webkit-text-stroke:0.2px;top:690.51px;font-size:11.5px;line-height:13.22px;color:#000;font-weight:normal;transform:scaleX(0.9740)">Sort by Object name</span>
<span class="tx" style="left:272.2px;-webkit-text-stroke:0.1px;top:111.08px;font-size:10px;line-height:11.5px;color:#ddd;font-weight:normal;transform:scaleX(0.9528)">..</span>
<div style="left:584.05px;top:9.8px;width:1.1px;height:12.6px;background:#0c0c0c"></div>
<div style="left:653.15px;top:9.8px;width:1.1px;height:12.6px;background:#0c0c0c"></div>
<div style="left:724.65px;top:9.8px;width:1.1px;height:12.6px;background:#0c0c0c"></div>
<div style="left:784.85px;top:9.8px;width:1.1px;height:12.6px;background:#0c0c0c"></div>
<div style="left:859.45px;top:9.8px;width:1.1px;height:12.6px;background:#0c0c0c"></div>
<div style="left:921.45px;top:9.8px;width:1.1px;height:12.6px;background:#0c0c0c"></div>
<div style="left:998.95px;top:9.8px;width:1.1px;height:12.6px;background:#0c0c0c"></div>
</div>

<!-- ===== annotations ===== -->
<svg style="left:0;top:0" width="1280" height="720" viewBox="0 0 1280 720">
<rect x="7.35" y="117.05" width="208.30" height="23.90" rx="5.15" fill="none" stroke="#aef85f" stroke-width="2.7"/>
<rect x="249.45" y="53.05" width="186.30" height="50.10" rx="5.65" fill="none" stroke="#fdcc5e" stroke-width="2.7"/>
<rect x="1162.50" y="55.00" width="110.60" height="23.20" rx="5.10" fill="none" stroke="#fdcc5e" stroke-width="2.8"/>
<rect x="2.40" y="85.10" width="220.70" height="631.40" rx="5.70" fill="none" stroke="#fdcc5e" stroke-width="2.6"/>
<rect x="551.08" y="326.07" width="408.75" height="142.85" rx="4.62" fill="#000" stroke="#fdcc5e" stroke-width="2.75"/>
<rect x="1040.08" y="148.07" width="209.75" height="97.75" rx="4.62" fill="#000" stroke="#fdcc5e" stroke-width="2.75"/>
<rect x="282.98" y="552.98" width="302.85" height="59.75" rx="4.62" fill="#000" stroke="#fdcc5e" stroke-width="2.75"/>
</svg>
<span class="tx" style="left:609.7px;top:374.08px;font-size:29px;line-height:33.35px;color:#fdc957;font-weight:bold;letter-spacing:2.381px;transform:scaleX(0.95)">File selection area</span>
<span class="tx" style="left:1083.8px;top:178.28px;font-size:29px;line-height:33.35px;color:#fdc957;font-weight:bold;letter-spacing:2.218px;transform:scaleX(0.95)">Execute</span>
<span class="tx" style="left:303.9px;top:562.88px;font-size:29px;line-height:33.35px;color:#fdc957;font-weight:bold;letter-spacing:2.472px;transform:scaleX(0.95)">Export properties</span>
<svg style="left:0;top:0" width="1280" height="720" viewBox="0 0 1280 720">
<path d="M363.3 554 L363.3 465 C363.3 400 338 368.6 290 368.6 C275 368.6 262 370.6 250 373" fill="none" stroke="#fdcc5e" stroke-width="3.9"/>
<path d="M224.2 376.7 L256.3 358 L252 372.5 L260.3 385 Z" fill="#fdcc5e"/>
<path d="M1083.6 149 L1083.8 122 C1083.8 92 1100 73 1132 70" fill="none" stroke="#fdcc5e" stroke-width="3.9"/>
<path d="M1157.8 67.4 L1121.4 59 L1130.4 70.1 L1125.3 85.8 Z" fill="#fdcc5e"/>
</svg>

<!-- window frame -->
<div style="left:0;top:0;width:1280px;height:1px;background:#e4e0d8"></div>
<div style="left:0;top:0;width:1px;height:720px;background:#e4e0d8"></div>
<div style="left:1278.6px;top:0;width:1.4px;height:720px;background:#e4e0d8"></div>
<div style="left:0;top:719px;width:1280px;height:1px;background:#e4e0d8"></div>
<div style="left:0;top:718px;width:1280px;height:1px;background:rgba(228,224,216,.45)"></div>
</div>
</body></html>
